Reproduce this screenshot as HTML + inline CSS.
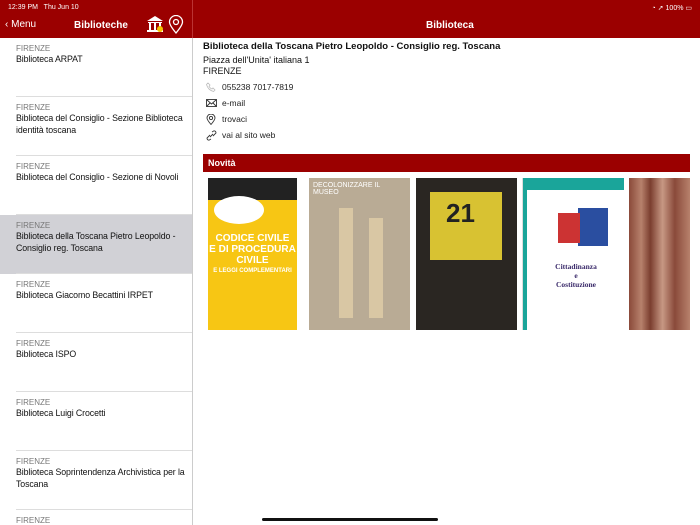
<!DOCTYPE html>
<html><head><meta charset="utf-8"><style>
*{margin:0;padding:0;box-sizing:border-box}
html,body{width:700px;height:525px;overflow:hidden}
body{font-family:"Liberation Sans",sans-serif;background:#fff;position:relative}
.hdr{position:absolute;top:0;left:0;width:700px;height:38px;background:#9b0000;color:#fff}
.sb{position:absolute;left:0;top:38px;width:193px;height:487px;border-right:1px solid #ccc;overflow:hidden}
.it{height:59px;padding:6px 0 0 16px;position:relative}
.it .c{font-size:8px;color:#777;margin-bottom:1px}
.it .t{font-size:8.8px;color:#111;line-height:11.5px;padding-right:2px;letter-spacing:-0.1px}
.it:after{content:"";position:absolute;left:16px;right:0;bottom:0;border-bottom:1px solid #ddd}
.sel{background:#d1d1d6}
.m{position:absolute;left:203px;font-size:9px;color:#111}
.row{position:absolute;left:206px;font-size:8.5px;color:#222}
.row span{position:absolute;left:16px;top:0;white-space:nowrap}
.bk{position:absolute;top:178px;height:152px;overflow:hidden}
</style></head><body>
<div class="hdr">
<div style="position:absolute;left:8px;top:4px;font-size:7px">12:39 PM&nbsp;&nbsp; Thu Jun 10</div>
<div style="position:absolute;right:8px;top:4px;font-size:7px">◔ ➚ 100% ▭</div>
<div style="position:absolute;left:5px;top:19px;font-size:10px">&#x2039;&nbsp;Menu</div>
<div style="position:absolute;left:74px;top:20px;font-size:10px;font-weight:bold">Biblioteche</div>
<svg style="position:absolute;left:146px;top:15px" width="18" height="18" viewBox="0 0 18 18"><path d="M1 6 L9 1 L17 6Z M2 7h14v1H2z M3 8h2v7H3z M8 8h2v7H8z M13 8h2v7h-2z M1 15h16v2H1z" fill="#fff"/><circle cx="14" cy="14" r="3" fill="#f5c400"/></svg>
<svg style="position:absolute;left:168px;top:15px" width="16" height="19" viewBox="0 0 16 19"><path d="M8 18 C3 12 1.5 9 1.5 7 A6.5 6.5 0 0 1 14.5 7 C14.5 9 13 12 8 18Z" fill="none" stroke="#fff" stroke-width="1.3"/><circle cx="8" cy="7" r="2.5" fill="none" stroke="#fff" stroke-width="1.3"/></svg>
<div style="position:absolute;left:192px;top:0;width:1px;height:38px;background:#b33"></div>
<div style="position:absolute;left:426px;top:20px;font-size:10px;font-weight:bold">Biblioteca</div>
</div>
<div class="sb">
<div class="it"><div class="c">FIRENZE</div><div class="t">Biblioteca ARPAT</div></div>
<div class="it"><div class="c">FIRENZE</div><div class="t">Biblioteca del Consiglio - Sezione Biblioteca identità toscana</div></div>
<div class="it"><div class="c">FIRENZE</div><div class="t">Biblioteca del Consiglio - Sezione di Novoli</div></div>
<div class="it sel"><div class="c">FIRENZE</div><div class="t">Biblioteca della Toscana Pietro Leopoldo - Consiglio reg. Toscana</div></div>
<div class="it"><div class="c">FIRENZE</div><div class="t">Biblioteca Giacomo Becattini IRPET</div></div>
<div class="it"><div class="c">FIRENZE</div><div class="t">Biblioteca ISPO</div></div>
<div class="it"><div class="c">FIRENZE</div><div class="t">Biblioteca Luigi Crocetti</div></div>
<div class="it"><div class="c">FIRENZE</div><div class="t">Biblioteca Soprintendenza Archivistica per la Toscana</div></div>
<div class="it" style="height:20px"><div class="c">FIRENZE</div></div>
</div>
<div class="m" style="top:41px;font-weight:bold;font-size:9.5px">Biblioteca della Toscana Pietro Leopoldo - Consiglio reg. Toscana</div>
<div class="m" style="top:55px">Piazza dell'Unita' italiana 1</div>
<div class="m" style="top:66px">FIRENZE</div>
<div class="row" style="top:82px"><svg width="10" height="10" viewBox="0 0 10 10"><path d="M2 1 L4 3 L3 4.5 Q4.5 6.5 6 7 L7 6 L9 8 L7.5 9.5 Q2 8 0.5 2.5Z" fill="none" stroke="#bbb" stroke-width=".8"/></svg><span>055238 7017-7819</span></div>
<div class="row" style="top:98px"><svg width="11" height="10" viewBox="0 0 11 10"><rect x=".5" y="1.5" width="10" height="7" fill="none" stroke="#333" stroke-width=".9"/><path d="M.5 1.5 L5.5 6 L10.5 1.5 M.5 8.5 L4 5 M10.5 8.5 L7 5" fill="none" stroke="#333" stroke-width=".9"/></svg><span>e-mail</span></div>
<div class="row" style="top:114px"><svg width="10" height="11" viewBox="0 0 10 11"><path d="M5 10.5 C2 7 1 5.5 1 4 A4 4 0 0 1 9 4 C9 5.5 8 7 5 10.5Z" fill="none" stroke="#333" stroke-width=".9"/><circle cx="5" cy="4" r="1.6" fill="none" stroke="#333" stroke-width=".9"/></svg><span>trovaci</span></div>
<div class="row" style="top:130px"><svg width="11" height="11" viewBox="0 0 11 11"><path d="M6 2 L8 0.8 Q10 1 10 3 L7 6 M5 9 L3 10.2 Q1 10 1 8 L4 5 M4 7 L7 4" fill="none" stroke="#333" stroke-width=".9"/></svg><span>vai al sito web</span></div>
<div style="position:absolute;left:203px;top:154px;width:487px;height:18px;background:#9b0000;color:#fff;font-size:9px;font-weight:bold;padding:4px 0 0 5px">Novità</div>
<div class="bk" style="left:208px;width:89px;background:#f7c614;color:#fff;font-size:10px;font-weight:bold;text-align:center;padding-top:55px;line-height:11px">CODICE CIVILE<br>E DI PROCEDURA<br>CIVILE<div style="font-size:6px">E LEGGI COMPLEMENTARI</div><div style="position:absolute;left:0;top:0;width:89px;height:22px;background:#222"></div><div style="position:absolute;left:6px;top:18px;width:50px;height:28px;border-radius:50%;background:#fff"></div></div>
<div class="bk" style="left:309px;width:101px;background:#b9ab95"><div style="position:absolute;left:30px;top:30px;width:14px;height:110px;background:#d9c7a4"></div><div style="position:absolute;left:60px;top:40px;width:14px;height:100px;background:#d9c7a4"></div><div style="font-size:7px;color:#fff;padding:4px">DECOLONIZZARE IL MUSEO</div></div>
<div class="bk" style="left:416px;width:101px;background:#2a2622"><div style="position:absolute;left:14px;top:14px;width:72px;height:68px;background:#d8c232"></div><div style="position:absolute;left:30px;top:20px;font-size:26px;font-weight:bold;color:#222">21</div></div>
<div class="bk" style="left:522px;width:102px;background:#fff;border-left:1px solid #ddd"><div style="position:absolute;left:0;top:0;width:4px;height:152px;background:#1aa59a"></div><div style="position:absolute;left:0;top:0;width:102px;height:12px;background:#1aa59a"></div><div style="position:absolute;left:55px;top:30px;width:30px;height:38px;background:#2a4ea0"></div><div style="position:absolute;left:35px;top:35px;width:22px;height:30px;background:#c33"></div><div style="position:absolute;left:28px;top:84px;font-size:7.5px;color:#3a2a6a;font-family:'Liberation Serif',serif;text-align:center;width:50px;font-weight:bold">Cittadinanza<br>e<br>Costituzione</div></div>
<div class="bk" style="left:629px;width:61px;background:linear-gradient(90deg,#8a4a3a,#b7816c 20%,#7b3e2f 35%,#c79884 55%,#8a4a3a 75%,#b7816c)"></div>
<div style="position:absolute;left:262px;top:518px;width:176px;height:3px;border-radius:2px;background:#111"></div>
</body></html>
